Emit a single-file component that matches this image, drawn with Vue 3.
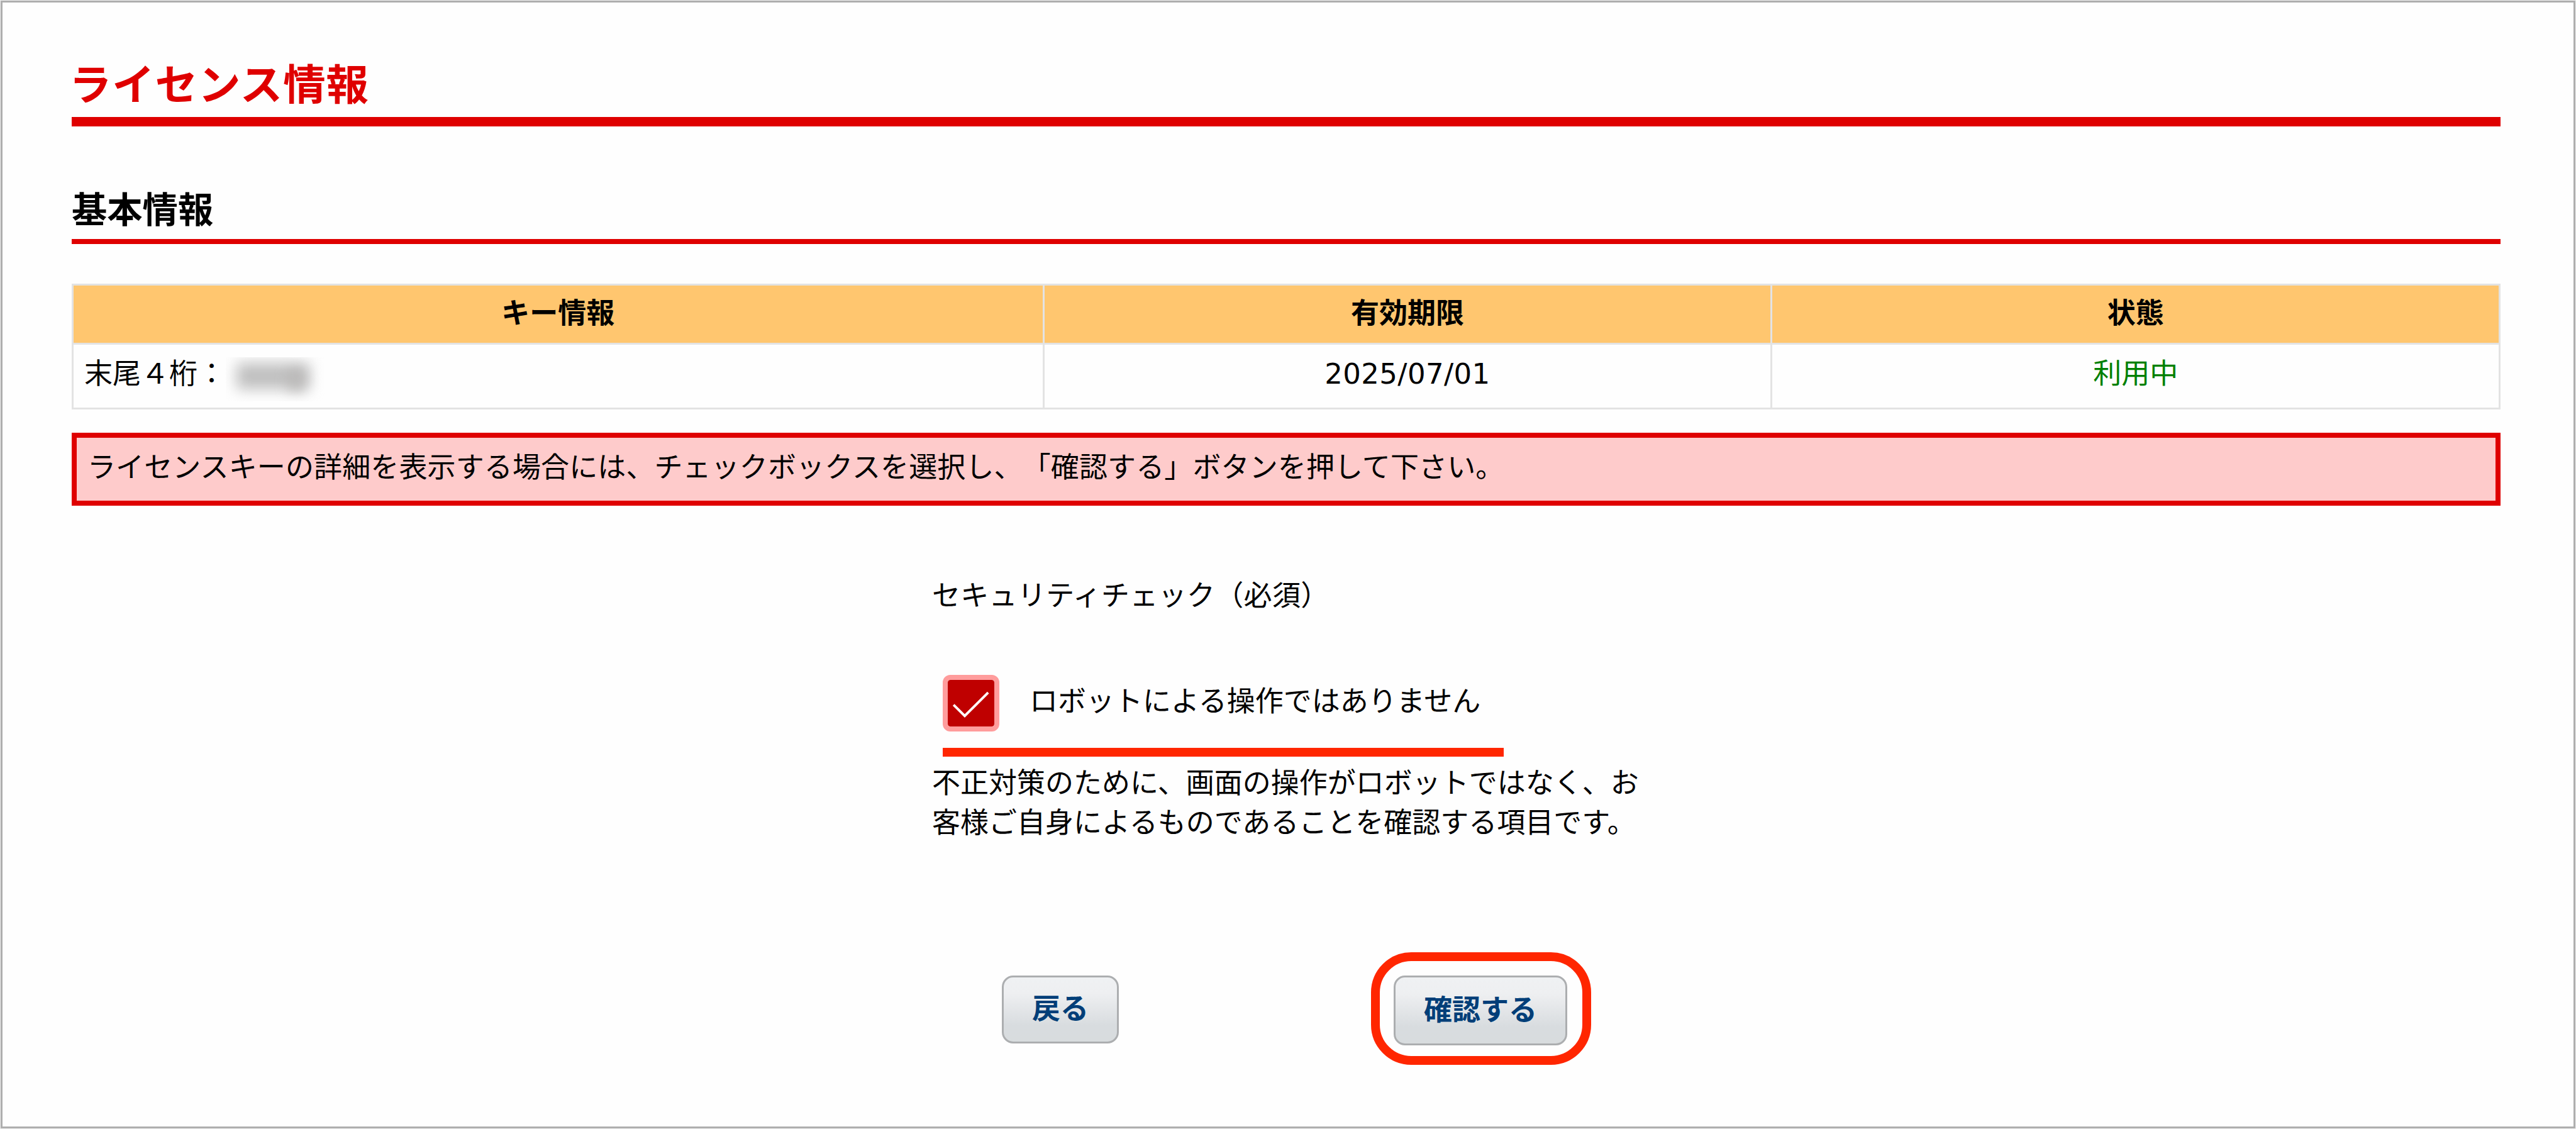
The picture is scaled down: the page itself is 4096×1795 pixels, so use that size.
<script setup>
const columns = ['キー情報', '有効期限', '状態']
</script>

<template>
  <main class="page">
    <h1 class="title">ライセンス情報</h1>
    <h2 class="subtitle">基本情報</h2>

    <table class="info">
      <thead>
        <tr>
          <th v-for="name in columns" :key="name">{{ name }}</th>
        </tr>
      </thead>
      <tbody>
        <tr>
          <td>
            <div class="key">末尾４桁：<span class="mask"><i></i><b></b></span></div>
          </td>
          <td class="date">2025/07/01</td>
          <td class="status">利用中</td>
        </tr>
      </tbody>
    </table>

    <p class="notice">ライセンスキーの詳細を表示する場合には、チェックボックスを選択し、「確認する」ボタンを押して下さい。</p>

    <section class="security">
      <p class="security-label">セキュリティチェック（必須）</p>
      <div class="check-row">
        <span class="checkbox">
          <svg viewBox="0 0 97 97" fill="none" stroke="#fff" stroke-width="4.2">
            <path d="M18.6 51.2 37.7 70.3 77.8 30.2" />
          </svg>
        </span>
        <span class="check-text">ロボットによる操作ではありません</span>
      </div>
      <p class="security-note">不正対策のために、画面の操作がロボットではなく、お<br />客様ご自身によるものであることを確認する項目です。</p>
    </section>

    <div class="actions">
      <button class="btn back" type="button">戻る</button>
      <div class="ring">
        <button class="btn confirm" type="button">確認する</button>
      </div>
    </div>
  </main>
</template>

<style>
html,
body {
  margin: 0;
  background: #efefef;
}
</style>

<style scoped>
.page {
  box-sizing: border-box;
  width: 4094px;
  height: 1793px;
  margin: 1px;
  padding: 0 116px 0 110px;
  border: 3px solid #aeaeae;
  background: #fefefe;
  overflow: hidden;
  color: #000;
  font-family: "Noto Sans CJK JP", sans-serif;
  font-size: 45px;
  line-height: 62px;
  text-spacing-trim: space-all;
  display: flow-root;
}
h1, h2, p { margin: 0; }

.title {
  box-sizing: border-box;
  height: 197px;
  padding-top: 80px;
  border-bottom: 15px solid #df0000;
  color: #df0000;
  font-size: 67.5px;
  line-height: 92px;
  letter-spacing: 0.8px;
  text-indent: -4px;
}
.subtitle {
  box-sizing: border-box;
  height: 187px;
  padding-top: 89px;
  border-bottom: 8px solid #df0000;
  font-size: 56.3px;
  line-height: 80px;
}

.info {
  width: 100%;
  height: 200px;
  margin-top: 63px;
  border-collapse: collapse;
  table-layout: fixed;
}
.info th,
.info td {
  box-sizing: border-box;
  padding: 0;
  border: 3px solid #e3e3e3;
  vertical-align: top;
  text-align: center;
}
.info th {
  width: 30%;
  height: 94px;
  padding-top: 10px;
  background: #ffc66f;
  font-weight: 700;
}
.info th:first-child { width: 40%; }
.info td {
  height: 103px;
  padding-top: 12px;
}
.info td:first-child { padding-left: 17px; text-align: left; }
.info .date {
  padding-top: 16px;
  font-family: "DejaVu Sans", sans-serif;
  letter-spacing: 0.4px;
}
.info .status { color: #008000; }
.key {
  display: flex;
  height: 80px;
}
.mask {
  position: relative;
  width: 170px;
  height: 70px;
  margin-top: 8px;
  overflow: hidden;
}
.mask i {
  position: absolute;
  left: 17px;
  top: 9px;
  width: 116px;
  height: 42px;
  background: #c0c0c0;
  filter: blur(11px);
}
.mask b {
  position: absolute;
  left: 98px;
  top: 20px;
  width: 28px;
  height: 34px;
  background: #b8b6b5;
  filter: blur(10px);
  opacity: 0.7;
}

.notice {
  box-sizing: border-box;
  height: 116px;
  margin-top: 37px;
  padding: 13px 17px;
  border: 8px solid #df0000;
  background: #fecbcb;
  letter-spacing: 0.12px;
}

.security {
  width: 1150px;
  margin: 109px 0 0 1368px;
}
.security-label { letter-spacing: 0.3px; }
.check-row {
  display: flex;
  box-sizing: border-box;
  width: 892px;
  height: 130px;
  margin: 98px 0 0 17px;
  border-bottom: 14px solid #ff2600;
}
.checkbox {
  box-sizing: border-box;
  width: 90px;
  height: 90px;
  border: 8px solid #ff9c9c;
  border-radius: 12px;
  background: linear-gradient(#bf0000, #bf0000) padding-box;
}
.checkbox svg {
  display: block;
  width: 90px;
  height: 90px;
  margin: -8px;
}
.check-text {
  margin: 8px 0 0 48px;
  white-space: nowrap;
}
.security-note {
  margin-top: 8px;
  line-height: 62.6px;
  white-space: nowrap;
}

.actions {
  display: flex;
  align-items: flex-start;
  margin: 178px 0 0 1479px;
}
.btn {
  box-sizing: border-box;
  padding: 0 0 8px;
  border: 3px solid #acaeb0;
  border-radius: 18px;
  background: linear-gradient(#eff1f3 0%, #eeeff1 25%, #d8dcdf 75%, #d8dcde 100%);
  color: #003e78;
  font: inherit;
  font-weight: 700;
}
.back {
  width: 186px;
  height: 108px;
  margin-top: 37px;
}
.ring {
  box-sizing: border-box;
  width: 350px;
  height: 179px;
  margin-left: 401px;
  padding: 23px 22px;
  border: 14px solid #ff2600;
  border-radius: 64px;
}
.confirm {
  display: block;
  width: 276px;
  height: 111px;
}
</style>
